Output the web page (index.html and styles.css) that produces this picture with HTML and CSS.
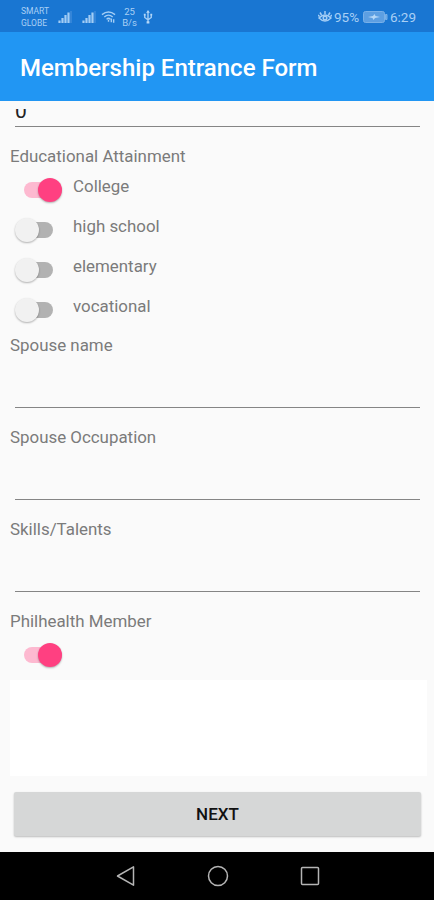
FILE: index.html
```html
<!DOCTYPE html>
<html>
	<head>
		<meta charset="UTF-8">
		<title>Membership Entrance Form</title>
		<link rel="stylesheet" href="styles.css">
	</head>
	<body>
		<div class="status">
			<div class="small carrier"><span>SMART</span><span>GLOBE</span></div>
			<svg class="signal" width="14" height="14" viewBox="0 0 14 14"><path d="M1.500 10.500v2.500M4.500 8v5M7.500 5v8M10.500 2.500v10.500"/><path class="faint" d="M13 1v12"/></svg>
			<svg class="signal second" width="14" height="14" viewBox="0 0 14 14"><path d="M1.500 10.500v2.500M4.500 8v5M7.500 5v8M10.500 2.500v10.500"/><path class="faint" d="M13 1v12"/></svg>
			<svg class="wifi" width="15" height="14" viewBox="0 0 16 14"><path d="M1 4.500Q8-1 15 4.500M3.500 7Q8 3 12.500 7M6 9.500Q8 7 10 9.500M8 10v2M11 8.500v4M13.500 13V9.500"/></svg>
			<div class="small speed"><span>25</span><span>B/s</span></div>
			<svg class="usb" width="10" height="14" viewBox="0 0 10 15"><path d="M5 2v11M1.500 5v3L5 10.500 8.500 8V5"/><path class="fill" d="M5 0l2 3H3zM3.500 12h3v2.500h-3zM.500 4h2v2h-2zM7.500 4h2v2h-2z"/></svg>
			<svg class="eye" width="14" height="14" viewBox="0 0 14 14"><path d="M1 8Q7 2 13 8Q7 14 1 8zM7 4V1M3.500 5L2 2.500M10.500 5L12 2.500M1.500 6.500L0 5M12.500 6.500L14 5"/><circle cx="7" cy="8" r="1.800"/></svg>
			<span class="percent">95%</span>
			<svg class="battery" width="25" height="12" viewBox="0 0 25 12"><rect class="case" x=".5" y=".5" width="21" height="11" rx="2"/><path class="case" d="M22.500 3.500H24v5h-1.500z"/><path class="fill" d="M5 6l5-1 1.500-2 1 2 4.500 1-5 1-1.500 2-1-2z"/></svg>
			<span class="time">6:29</span>
		</div>
		<div class="bar">Membership Entrance Form</div>
		<div class="form">
			<div class="cut"><span>0</span></div>
			<div class="label">Educational Attainment</div>
			<div class="options">
				<div class="row"><div class="switch on"><i></i></div><span>College</span></div>
				<div class="row"><div class="switch"><i></i></div><span>high school</span></div>
				<div class="row"><div class="switch"><i></i></div><span>elementary</span></div>
				<div class="row"><div class="switch"><i></i></div><span>vocational</span></div>
			</div>
			<div class="label">Spouse name</div>
			<div class="field"></div>
			<div class="label">Spouse Occupation</div>
			<div class="field"></div>
			<div class="label">Skills/Talents</div>
			<div class="field"></div>
			<div class="label">Philhealth Member</div>
			<div class="row member"><div class="switch on"><i></i></div></div>
			<div class="blank"></div>
			<button class="next">NEXT</button>
		</div>
		<div class="nav">
			<svg width="22" height="22" viewBox="0 0 22 22"><path d="M2.500 11L18.500 1.800V20.200z"/></svg>
			<svg width="22" height="22" viewBox="0 0 22 22"><circle cx="11" cy="11" r="9.500"/></svg>
			<svg width="22" height="22" viewBox="0 0 22 22"><rect x="2.500" y="2.500" width="17" height="17" rx="1"/></svg>
		</div>
	</body>
</html>
```
FILE: styles.css
```css
*{
	margin: 0;
	padding: 0;
	box-sizing: border-box;
}
body{
	width: 434px;
	height: 900px;
	display: flex;
	flex-direction: column;
	overflow: hidden;
	background: #fafafa;
	font-family: Roboto, "Liberation Sans", sans-serif;
	font-size: 16.900px;
	color: #7b7b7b;
}
.status{
	height: 32px;
	flex: none;
	display: flex;
	align-items: center;
	padding: 2px 17px 0 21px;
	background: #1976d2;
	color: #a9d0f5;
}
.status svg{
	flex: none;
	fill: none;
	stroke: #a3cdf5;
	stroke-width: 1.5;
}
.status .signal{
	stroke-width: 2.2;
}
.status .fill{
	fill: #b5d8f8;
	stroke: none;
}
.status .faint{
	stroke: #4790dc;
	stroke-width: 1.2;
}
.small{
	display: flex;
	flex-direction: column;
	font-size: 8.500px;
	line-height: 12px;
}
.carrier{
	width: 37px;
}
.speed{
	width: 15px;
	margin-left: 6px;
	align-items: center;
	font-size: 9.500px;
	line-height: 11px;
}
.second{
	margin-left: 10px;
}
.wifi{
	margin-left: 5px;
}
.usb{
	margin-left: 6px;
}
.eye{
	margin-left: auto;
}
.percent{
	width: 26px;
	margin-left: 2px;
	font-size: 13.500px;
}
.battery{
	margin-left: 3px;
}
.status .case{
	fill: #5d9fe2;
	stroke: #78b0e8;
	stroke-width: 1;
}
.time{
	width: 27px;
	margin-left: 2px;
	font-size: 13.500px;
}
.bar{
	height: 69px;
	flex: none;
	padding-left: 20px;
	background: #2196f3;
	color: #fff;
	font-size: 24px;
	font-weight: 500;
	line-height: 72px;
}
.form{
	height: 751px;
	flex: none;
	padding: 8px 8px 0 10px;
}
.cut{
	height: 18px;
	margin: 0 6px 18px 5px;
	display: flex;
	align-items: flex-end;
	overflow: hidden;
	border-bottom: 1px solid #858585;
	color: #222;
	font-size: 21px;
}
.cut span{
	line-height: 24px;
	margin-bottom: 3px;
}
.label{
	height: 22px;
	line-height: 22px;
}
.options{
	padding: 3px 0 4px;
}
.row{
	height: 40px;
	display: flex;
}
.row span{
	line-height: 32px;
}
.switch{
	width: 38px;
	height: 16px;
	margin: 12px 20px 0 5px;
	display: flex;
	align-items: center;
	border-radius: 8px;
	background: linear-gradient(to right, transparent 10px, #b2b2b2 10px);
}
.switch i{
	width: 24px;
	height: 24px;
	flex: none;
	border-radius: 50%;
	background: #f1f1f1;
	box-shadow: 0 1px 2px rgba(0,0,0,.3);
}
.switch.on{
	margin-left: 14px;
	margin-right: 11px;
	justify-content: flex-end;
	background: #fdb9d0;
}
.switch.on i{
	background: #ff4081;
}
.field{
	height: 52px;
	margin: 0 6px 18px 5px;
	border-bottom: 1px solid #858585;
}
.member{
	height: 48px;
	padding-top: 3px;
}
.blank{
	height: 96px;
	margin-right: -1px;
	background: #fff;
}
.next{
	display: block;
	width: 407px;
	height: 44px;
	margin: 16px 0 0 4px;
	border: none;
	border-radius: 2px;
	background: #d6d7d7;
	box-shadow: 0 1px 2px rgba(0,0,0,.25);
	color: #111;
	font-family: inherit;
	font-size: 17px;
	font-weight: 500;
	line-height: 42px;
}
.nav{
	height: 48px;
	flex: none;
	display: flex;
	justify-content: center;
	align-items: center;
	gap: 70px;
	padding-left: 1px;
	background: #000;
}
.nav svg{
	fill: none;
	stroke: #b5b5b5;
	stroke-width: 1.5;
	stroke-linejoin: round;
}
```
